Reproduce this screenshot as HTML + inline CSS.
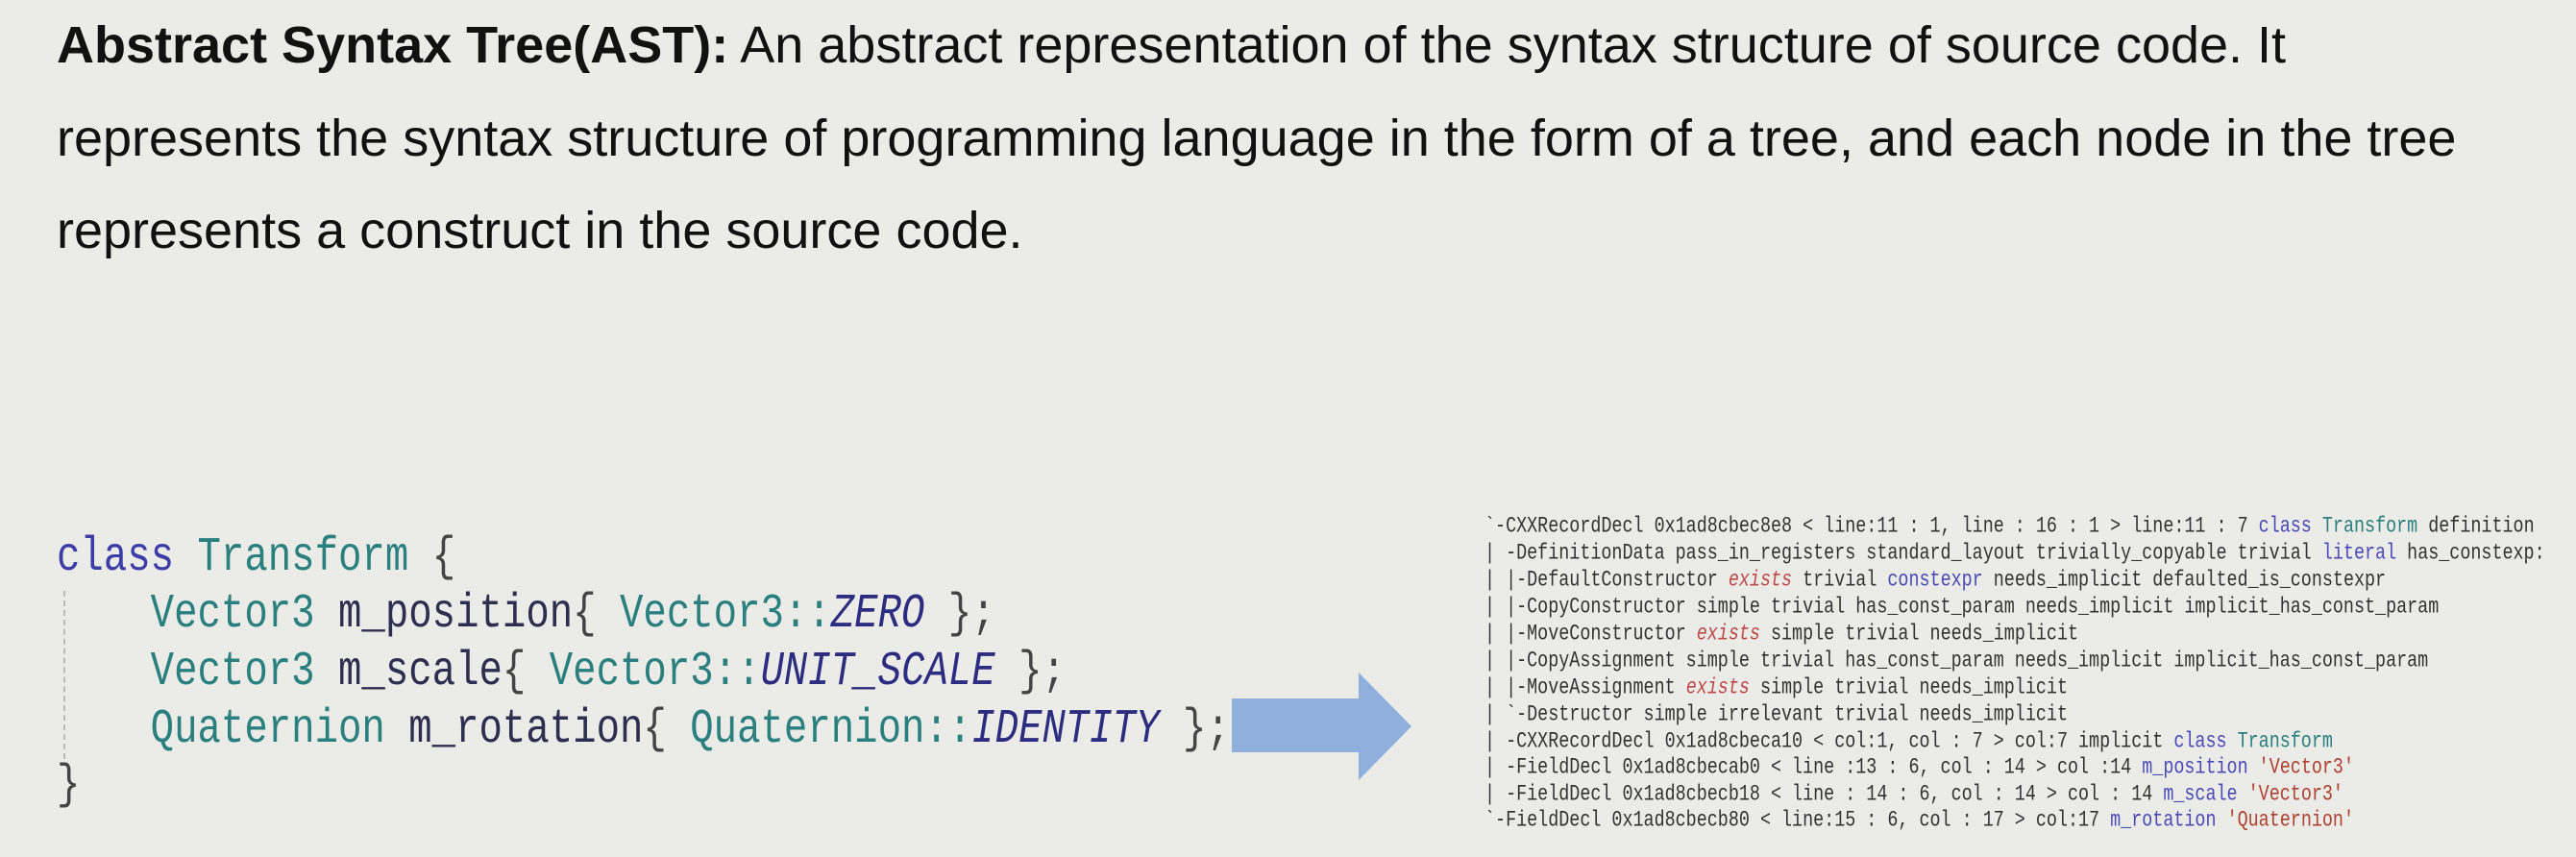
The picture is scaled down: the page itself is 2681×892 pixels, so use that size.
<!DOCTYPE html>
<html><head><meta charset="utf-8"><style>
html,body{margin:0;padding:0}
body{width:2681px;height:892px;background:#ebebe7;position:relative;overflow:hidden}
.t{position:absolute;left:59px;font-family:"Liberation Sans",sans-serif;font-size:54px;line-height:54px;color:#111;white-space:pre}
.c{position:absolute;left:59px;font-family:"Liberation Mono",monospace;font-size:40.7px;line-height:40px;white-space:pre;transform:scaleY(1.23);transform-origin:0 31px;color:#2a7f7f}
.a{position:absolute;left:1545px;font-family:"Liberation Mono",monospace;font-size:18.4px;line-height:18px;white-space:pre;transform:scaleY(1.28);transform-origin:0 14px;color:#333}
.kw{color:#3d3da8}.ty{color:#2a7f7f}.id{color:#2e2e50}.it{font-style:italic;color:#2c2c80}.p{color:#444}
.r{color:#c04848;font-style:italic}.b{color:#4a4ab8}.s{color:#b04030}
</style></head><body>
<div class="t" style="top:20px"><b>Abstract Syntax Tree(AST):</b> An abstract representation of the syntax structure of source code. It</div>
<div class="t" style="top:117px">represents the syntax structure of programming language in the form of a tree, and each node in the tree</div>
<div class="t" style="top:213px">represents a construct in the source code.</div>

<div style="position:absolute;left:66px;top:615px;height:175px;border-left:2px dashed #bbb"></div>
<div class="c" style="top:563px"><span class="kw">class</span> <span class="ty">Transform</span> <span class="p">{</span></div>
<div class="c" style="top:622px">    Vector3 <span class="id">m_position</span><span class="p">{</span> Vector3::<span class="it">ZERO</span> <span class="p">};</span></div>
<div class="c" style="top:682px">    Vector3 <span class="id">m_scale</span><span class="p">{</span> Vector3::<span class="it">UNIT_SCALE</span> <span class="p">};</span></div>
<div class="c" style="top:742px">    Quaternion <span class="id">m_rotation</span><span class="p">{</span> Quaternion::<span class="it">IDENTITY</span> <span class="p">};</span></div>
<div class="c" style="top:800px"><span class="p">}</span></div>

<svg style="position:absolute;left:0;top:0" width="2681" height="892">
<polygon points="1282,727 1414,727 1414,700 1469,756 1414,812 1414,783 1282,783" fill="#8fb0dd"/>
</svg>

<div class="a" style="top:541px">`-CXXRecordDecl 0x1ad8cbec8e8 &lt; line:11 : 1, line : 16 : 1 &gt; line:11 : 7 <span class="b">class</span> <span class="ty">Transform</span> definition</div>
<div class="a" style="top:569px">| -DefinitionData pass_in_registers standard_layout trivially_copyable trivial <span class="b">literal</span> has_constexp:</div>
<div class="a" style="top:597px">| |-DefaultConstructor <span class="r">exists</span> trivial <span class="b">constexpr</span> needs_implicit defaulted_is_constexpr</div>
<div class="a" style="top:625px">| |-CopyConstructor simple trivial has_const_param needs_implicit implicit_has_const_param</div>
<div class="a" style="top:653px">| |-MoveConstructor <span class="r">exists</span> simple trivial needs_implicit</div>
<div class="a" style="top:681px">| |-CopyAssignment simple trivial has_const_param needs_implicit implicit_has_const_param</div>
<div class="a" style="top:709px">| |-MoveAssignment <span class="r">exists</span> simple trivial needs_implicit</div>
<div class="a" style="top:737px">| `-Destructor simple irrelevant trivial needs_implicit</div>
<div class="a" style="top:765px">| -CXXRecordDecl 0x1ad8cbeca10 &lt; col:1, col : 7 &gt; col:7 implicit <span class="b">class</span> <span class="ty">Transform</span></div>
<div class="a" style="top:792px">| -FieldDecl 0x1ad8cbecab0 &lt; line :13 : 6, col : 14 &gt; col :14 <span class="b">m_position</span> <span class="s">'Vector3'</span></div>
<div class="a" style="top:820px">| -FieldDecl 0x1ad8cbecb18 &lt; line : 14 : 6, col : 14 &gt; col : 14 <span class="b">m_scale</span> <span class="s">'Vector3'</span></div>
<div class="a" style="top:847px">`-FieldDecl 0x1ad8cbecb80 &lt; line:15 : 6, col : 17 &gt; col:17 <span class="b">m_rotation</span> <span class="s">'Quaternion'</span></div>
</body></html>
